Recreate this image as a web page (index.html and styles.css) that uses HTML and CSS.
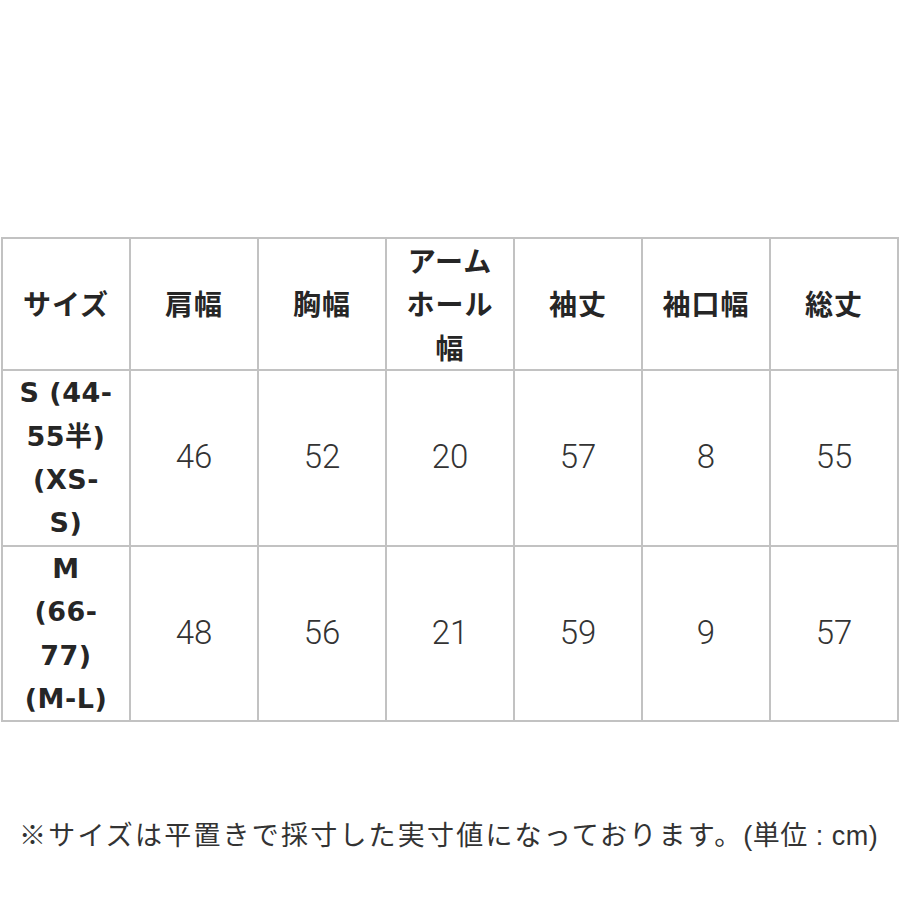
FILE: index.html
```html
<!DOCTYPE html>
<html lang="ja">
<head>
<meta charset="utf-8">
<title>サイズ表</title>
<link rel="stylesheet" href="styles.css">
</head>
<body>
<div class="page">
  <table class="size-table">
    <colgroup>
      <col><col><col><col><col><col><col>
    </colgroup>
    <thead>
      <tr class="head-row">
        <th>サイズ</th>
        <th>肩幅</th>
        <th>胸幅</th>
        <th>アーム<br>ホール<br>幅</th>
        <th>袖丈</th>
        <th>袖口幅</th>
        <th>総丈</th>
      </tr>
    </thead>
    <tbody>
      <tr class="body-row">
        <th class="size-name">S (44-<br>55半)<br>(XS-<br>S)</th>
        <td>46</td>
        <td>52</td>
        <td>20</td>
        <td>57</td>
        <td>8</td>
        <td>55</td>
      </tr>
      <tr class="body-row">
        <th class="size-name">M<br>(66-<br>77)<br>(M-L)</th>
        <td>48</td>
        <td>56</td>
        <td>21</td>
        <td>59</td>
        <td>9</td>
        <td>57</td>
      </tr>
    </tbody>
  </table>
  <p class="note">※サイズは平置きで採寸した実寸値になっております。<span class="unit">(単位 : cm)</span></p>
</div>
</body>
</html>
```
FILE: styles.css
```css
html, body {
  margin: 0;
  padding: 0;
  background: #ffffff;
}

.page {
  padding-top: 237px;
  width: 900px;
}

.size-table {
  width: 898px;
  margin-left: 1px;
  border-collapse: collapse;
  table-layout: fixed;
  color: #262626;
}

.size-table th,
.size-table td {
  border: 2px solid #c2c2c2;
  padding: 0;
  text-align: center;
  vertical-align: middle;
}

.size-table th {
  font-family: "DejaVu Sans", "Noto Sans CJK JP", sans-serif;
  font-weight: 700;
  font-size: 27px;
  line-height: 43.4px;
}

.head-row th {
  font-family: "Noto Sans CJK JP", sans-serif;
  font-size: 28px;
  letter-spacing: 1px;
  height: 128px;
}

.size-name {
  letter-spacing: 0.5px;
}

.body-row {
  height: 174px;
}

.size-table td {
  font-family: Roboto, "Liberation Sans", sans-serif;
  font-weight: 300;
  font-size: 33px;
  color: #333333;
  padding-bottom: 3px;
}

.note {
  margin: 97px 0 0 19px;
  font-family: "Noto Sans CJK JP", sans-serif;
  font-weight: 400;
  font-size: 27px;
  letter-spacing: 2.2px;
  line-height: 30px;
  color: #333333;
  white-space: nowrap;
}

.unit {
  font-family: "Liberation Sans", "Noto Sans CJK JP", sans-serif;
  letter-spacing: 0.5px;
}
```
